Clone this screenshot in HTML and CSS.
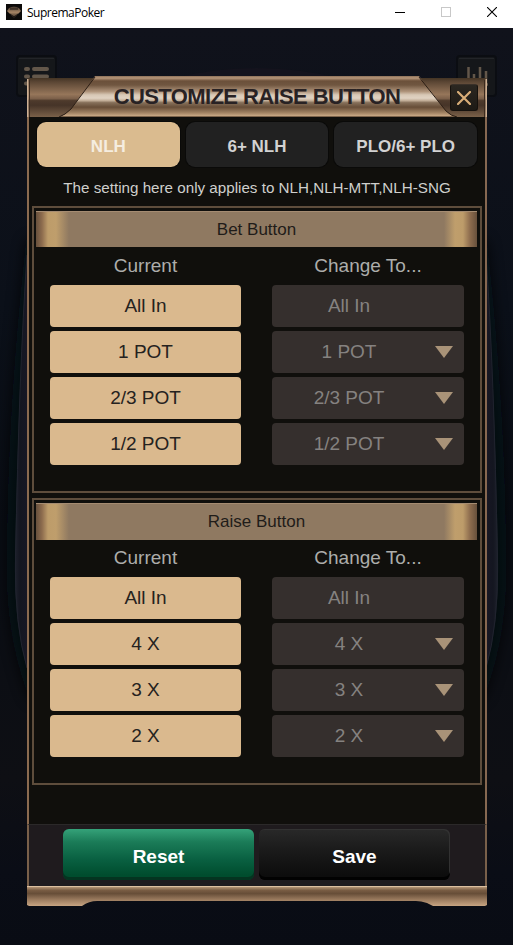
FILE: index.html
```html
<!DOCTYPE html>
<html lang="en">
<head>
  <meta charset="UTF-8" />
  <meta name="viewport" content="width=device-width, initial-scale=1.0"/>
  <title>SupremaPoker</title>
  <link rel="stylesheet" href="styles.css">
</head>
<body>

<header class="titlebar">
  <svg class="app-icon" width="16" height="16" viewBox="0 0 16 16">
    <defs>
      <linearGradient id="badge" x1="0" y1="0" x2="0" y2="1">
        <stop offset="0" stop-color="#4a3c30"/>
        <stop offset=".5" stop-color="#c29a75"/>
        <stop offset="1" stop-color="#2c241e"/>
      </linearGradient>
    </defs>
    <rect width="16" height="16" fill="#0d0b0a"/>
    <path d="M3 4Q8 1 13 4L15 7 12 10 8 14 4 10 1 7Z" fill="url(#badge)" opacity=".85"/>
    <path d="M4 5h8M4 10l4 3 4-3" stroke="#1b1512" fill="none"/>
  </svg>
  <span class="app-name">SupremaPoker</span>
  <div class="window-controls">
    <svg width="10" height="10" viewBox="0 0 10 10"><path d="M0 5.500h10" stroke="#000"/></svg>
    <svg width="10" height="10" viewBox="0 0 10 10"><rect x=".5" y=".5" width="9" height="9" fill="none" stroke="#c8c8c8"/></svg>
    <svg width="10" height="10" viewBox="0 0 10 10"><path d="M0 0L10 10M10 0L0 10" stroke="#000" stroke-width="1.1"/></svg>
  </div>
</header>

<main class="stage">
  <!-- poker table edge behind the dialog -->
  <svg class="table-bg" width="513" height="917" viewBox="0 28 513 917">
    <defs>
      <linearGradient id="rail" gradientUnits="userSpaceOnUse" x1="14" y1="0" x2="499" y2="0">
        <stop offset="0" stop-color="#20242f"/>
        <stop offset=".012" stop-color="#141620"/>
        <stop offset=".03" stop-color="#171725"/>
        <stop offset=".97" stop-color="#171725"/>
        <stop offset=".988" stop-color="#141620"/>
        <stop offset="1" stop-color="#20242f"/>
      </linearGradient>
      <filter id="soft" x="-20%" width="140%"><feGaussianBlur stdDeviation="7"/></filter>
    </defs>
    <path d="M26 240Q5 430 7 590Q10 650 30 700H483Q503 650 506 590Q508 430 487 240Z" fill="#06080b" opacity=".7" filter="url(#soft)"/>
    <path d="M27 255Q19 370 15 560Q14 625 27 668H486Q499 625 498 560Q494 370 486 255Z" fill="url(#rail)"/>
    <path d="M27 255Q19 370 15.500 560Q14.500 625 27 668M486 255Q494 370 497.500 560Q498.500 625 486 668" fill="none" stroke="#20232e"/>
    <path d="M175 78Q215 68 257 68Q298 68 338 78Z" fill="#14131d"/>
  </svg>

  <svg class="corner-btn menu-btn" width="41" height="42" viewBox="0 0 41 42">
    <rect width="41" height="42" rx="4" fill="#0b0d12"/>
    <rect x="2" y="2" width="37" height="38" rx="2" fill="#15171a"/>
    <path d="M3 3.500h35" stroke="#222428"/>
    <path d="M10 14h2M10 21.500h2M10 28.500h2M18 14h13M18 21.500h13M18 28.500h13" stroke="#63574a" stroke-width="4" stroke-linecap="round"/>
  </svg>
  <svg class="corner-btn stats-btn" width="41" height="42" viewBox="0 0 41 42">
    <rect width="41" height="42" rx="4" fill="#0b0d12"/>
    <rect x="2" y="2" width="37" height="38" rx="2" fill="#15171a"/>
    <path d="M3 3.500h35" stroke="#222428"/>
    <path d="M12.500 12v18M18 19v11M24 12v18M30 16v14M9 29.500h23" stroke="#63574a" stroke-width="2.500"/>
  </svg>

  <section class="dialog">
    <div class="dialog-head">
      <svg class="head-art" width="460" height="41" viewBox="0 0 460 41">
        <defs>
          <linearGradient id="wing" x1="0" y1="0" x2="0" y2="1">
            <stop offset="0" stop-color="#443424"/>
            <stop offset=".1" stop-color="#5b4634"/>
            <stop offset=".42" stop-color="#96765a"/>
            <stop offset=".53" stop-color="#7c604a"/>
            <stop offset=".58" stop-color="#4e3a2c"/>
            <stop offset=".7" stop-color="#463428"/>
            <stop offset="1" stop-color="#7b6149"/>
          </linearGradient>
          <linearGradient id="plate" x1="0" y1="0" x2="0" y2="1">
            <stop offset="0" stop-color="#8c7058"/>
            <stop offset=".05" stop-color="#b8977a"/>
            <stop offset=".12" stop-color="#6b503a"/>
            <stop offset=".22" stop-color="#705640"/>
            <stop offset=".38" stop-color="#b0957c"/>
            <stop offset=".46" stop-color="#d8c8b6"/>
            <stop offset=".54" stop-color="#e0d2c2"/>
            <stop offset=".6" stop-color="#c2ae98"/>
            <stop offset=".65" stop-color="#86705a"/>
            <stop offset=".76" stop-color="#674e38"/>
            <stop offset=".9" stop-color="#a38464"/>
            <stop offset=".97" stop-color="#c8a783"/>
            <stop offset="1" stop-color="#493626"/>
          </linearGradient>
        </defs>
        <path d="M0 3.500Q0 2 2 2H458Q460 2 460 3.500V41H0Z" fill="url(#wing)"/>
        <path d="M68 0H392L419 35Q424 40 430 41H32Q38 39 44 33Z" fill="url(#plate)"/>
        <path d="M68 1L44 33Q38 39 32 41M392 1L419 35Q424 40 430 41" fill="none" stroke="#2a1d14"/>
        <path d="M.5 3V41M459.500 3V41" stroke="#cdb094" stroke-width="2"/>
        <path d="M2.500 4V41M457.500 4V41" stroke="#3b2a1e"/>
      </svg>
      <h1 class="dialog-title">CUSTOMIZE RAISE BUTTON</h1>
      <button class="close-btn" aria-label="Close">
        <svg width="14" height="14" viewBox="0 0 14 14"><path d="M1 1L13 13M13 1L1 13" stroke="#d9ae78" stroke-width="2.200" stroke-linecap="round"/></svg>
      </button>
    </div>

    <div class="dialog-body">
      <nav class="tabs">
        <button class="tab active">NLH</button>
        <button class="tab">6+ NLH</button>
        <button class="tab">PLO/6+ PLO</button>
      </nav>
      <p class="notice">The setting here only applies to NLH,NLH-MTT,NLH-SNG</p>

      <div class="group">
        <h2 class="group-title bet-title">Bet Button</h2>
        <div class="columns">
          <div class="column">
            <h3>Current</h3>
            <div class="current">All In</div>
            <div class="current">1 POT</div>
            <div class="current">2/3 POT</div>
            <div class="current">1/2 POT</div>
          </div>
          <div class="column">
            <h3>Change To...</h3>
            <div class="change">All In</div>
            <div class="change picker">1 POT</div>
            <div class="change picker">2/3 POT</div>
            <div class="change picker">1/2 POT</div>
          </div>
        </div>
      </div>

      <div class="group">
        <h2 class="group-title">Raise Button</h2>
        <div class="columns">
          <div class="column">
            <h3>Current</h3>
            <div class="current">All In</div>
            <div class="current">4 X</div>
            <div class="current">3 X</div>
            <div class="current">2 X</div>
          </div>
          <div class="column">
            <h3>Change To...</h3>
            <div class="change">All In</div>
            <div class="change picker">4 X</div>
            <div class="change picker">3 X</div>
            <div class="change picker">2 X</div>
          </div>
        </div>
      </div>
    </div>

    <div class="actions">
      <button class="action reset">Reset</button>
      <button class="action save">Save</button>
    </div>

    <svg class="dialog-base" width="460" height="21" viewBox="0 0 460 21">
      <defs>
        <linearGradient id="base" x1="0" y1="0" x2="0" y2="1">
          <stop offset="0" stop-color="#c9a98a"/>
          <stop offset=".1" stop-color="#a18263"/>
          <stop offset=".22" stop-color="#785c43"/>
          <stop offset=".38" stop-color="#674e38"/>
          <stop offset=".68" stop-color="#9a7b5e"/>
          <stop offset="1" stop-color="#c7a482"/>
        </linearGradient>
      </defs>
      <path d="M0 0H460V19L458 20H406L400 17Q394 15 389 15H70Q62 15 55 20H2L0 19Z" fill="url(#base)"/>
      <path d="M0 .5H460" stroke="#dcc0a0"/>
    </svg>
  </section>
</main>

</body>
</html>
```
FILE: styles.css
```css
* {
  box-sizing: border-box;
}
body {
  margin: 0;
  width: 513px;
  height: 945px;
  overflow: hidden;
  font-family: "Liberation Sans", Arial, sans-serif;
  background: #0a0c14;
}
svg {
  display: block;
}
h1, h2, h3, p {
  margin: 0;
  font-weight: normal;
}
button {
  font-family: inherit;
  border: none;
  padding: 0;
  cursor: pointer;
}

/* window title bar */
.titlebar {
  display: flex;
  align-items: center;
  height: 28px;
  padding: 0 16px 4px 6px;
  background: #fff;
}
.app-name {
  margin-left: 5px;
  padding-top: 2px;
  font-family: "Open Sans", sans-serif;
  font-size: 12px;
  line-height: 16px;
  color: #000;
  letter-spacing: -0.5px;
}
.window-controls {
  display: flex;
  gap: 36px;
  margin-left: auto;
}

.stage {
  position: relative;
  height: 917px;
  padding: 48px 26px 0 27px;
  background: linear-gradient(#10121b, #0b1019 30%, #090d14 55%, #0e0f14 82%, #0a0d16 92%, #090c14);
}
.table-bg {
  position: absolute;
  left: 0;
  top: 0;
}
.corner-btn {
  position: absolute;
  top: 27px;
}
.menu-btn {
  left: 16px;
}
.stats-btn {
  left: 456px;
}

/* dialog */
.dialog {
  position: relative;
  width: 460px;
}
.dialog-head {
  position: relative;
  display: flex;
  justify-content: center;
  height: 41px;
}
.head-art {
  position: absolute;
  left: 0;
  top: 0;
}
.dialog-title {
  position: relative;
  font-size: 22px;
  line-height: 41px;
  font-weight: bold;
  color: #282224;
  white-space: nowrap;
  letter-spacing: -0.6px;
}
.close-btn {
  position: absolute;
  left: 423px;
  top: 8px;
  display: flex;
  align-items: center;
  justify-content: center;
  width: 28px;
  height: 27px;
  border: 1px solid #15110d;
  border-top-color: #3a3129;
  border-radius: 3px;
  background: linear-gradient(#2b2721, #1d1a15);
}
.dialog-body {
  height: 707px;
  padding: 5px 3px 0 3px;
  background: #100f0c;
  border-left: 2px solid #8b6b50;
  border-right: 2px solid #866851;
}
.tabs {
  display: flex;
  gap: 6px;
  padding: 0 5px;
}
.tab {
  flex: 1;
  height: 45px;
  border-radius: 9px;
  font-size: 17px;
  font-weight: bold;
  color: #d2d2d2;
  background: #212121;
  box-shadow: 0 0 0 1px #0a0a09;
  padding-top: 4px;
}
.tab.active {
  color: #f5ede0;
  background: #dabb8f;
}
.notice {
  height: 39px;
  line-height: 42px;
  font-size: 15.2px;
  color: #cfcfcd;
  text-align: center;
  white-space: nowrap;
}

/* settings groups */
.group {
  height: 287px;
  margin-bottom: 5px;
  padding: 3px 3px 0 2px;
  border: 2px solid #5e4d3c;
}
.group-title {
  height: 37px;
  line-height: 35px;
  font-size: 17px;
  color: #1f1c19;
  text-align: center;
  background: linear-gradient(90deg, #67503c 0, #8d6c4e 6px, #bd9c6a 12px, #bf9e6c 20px, #8f7961 33px, #8f7961 408px, #bf9e6c 419px, #bd9c6a 427px, #8d6c4e 434px, #67503c 441px);
  border-top: 1px solid #a58c72;
}
.bet-title {
  height: 36px;
  margin-bottom: 1px;
}
.columns {
  display: flex;
  gap: 31px;
  padding: 0 13px 0 14px;
}
.column {
  width: 191px;
  display: flex;
  flex-direction: column;
  gap: 4px;
  font-size: 19px;
  text-align: center;
}
.column + .column {
  width: 192px;
}
.column h3 {
  height: 33px;
  line-height: 35px;
  font-size: 19px;
  color: #adadab;
}
.current,
.change {
  height: 42px;
  line-height: 42px;
  border-radius: 4px;
}
.current {
  color: #252220;
  background: #dab98e;
}
.change {
  position: relative;
  padding-right: 38px;
  color: #858280;
  background: #352f2d;
}
.picker::after {
  content: "";
  position: absolute;
  right: 11px;
  top: 15px;
  border: solid transparent;
  border-width: 12px 9.5px 0;
  border-top-color: #a99378;
}

/* footer buttons */
.actions {
  display: flex;
  gap: 5px;
  height: 62px;
  padding: 4px 34px 0;
  background: #1f1b1e;
  border-top: 1px solid #2b2929;
  border-left: 2px solid #79604a;
  border-right: 2px solid #79604a;
}
.action {
  width: 191px;
  height: 51px;
  border-radius: 6px;
  font-size: 19px;
  font-weight: bold;
  color: #fff;
  padding-top: 4px;
}
.reset {
  background: linear-gradient(#35a279, #1b7c58 25%, #096041 60%, #004d2e 90%);
  box-shadow: inset 0 -3px 0 #043420;
}
.save {
  background: linear-gradient(#292929, #1b1b1b 40%, #0d0d0d 90%);
  box-shadow: inset 0 -3px 0 #020202, inset -1px 1px 0 #323232;
}
```
